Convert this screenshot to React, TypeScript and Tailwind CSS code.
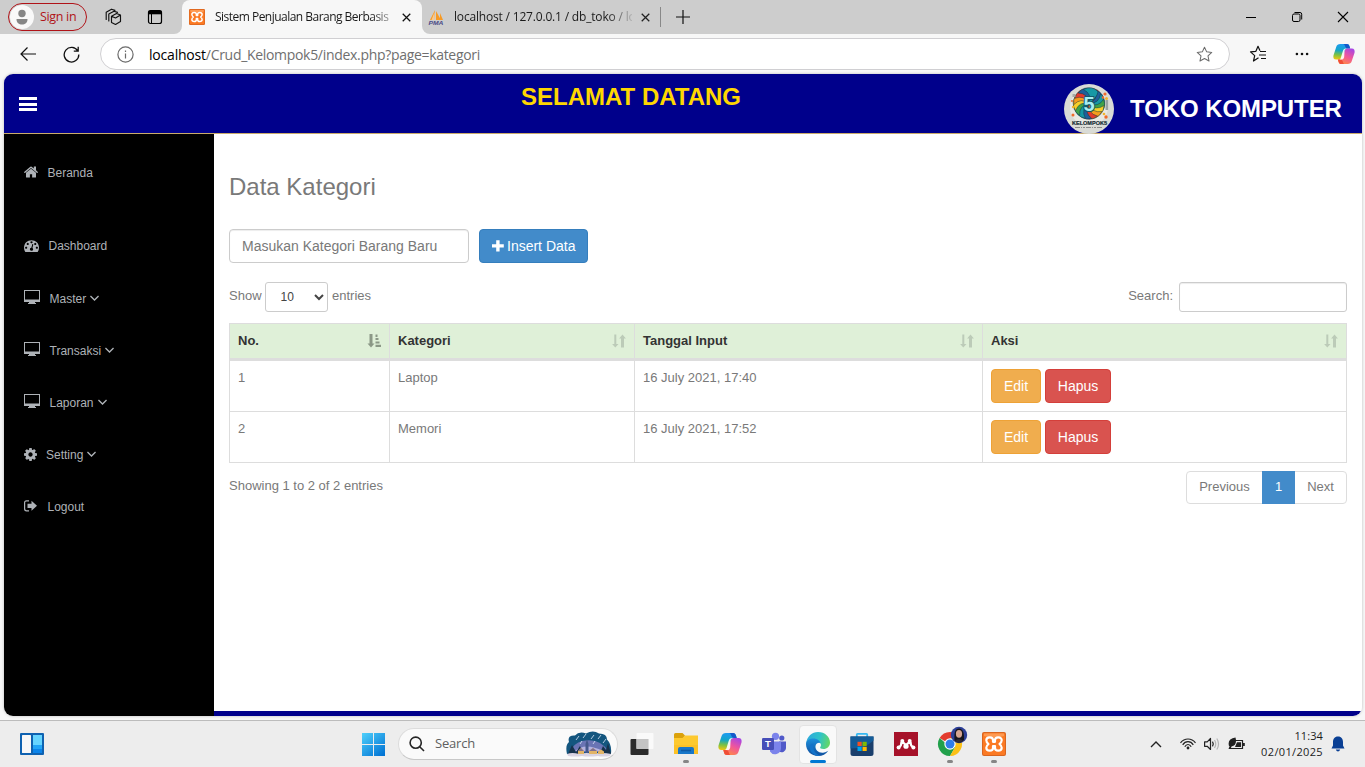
import React from 'react';

const segoe = "font-['Open_Sans','Noto_Sans',sans-serif]";

function Copilot({ id, className }: { id: string; className: string }) {
  return (
    <svg viewBox="0 0 24 24" className={className}>
      <defs>
        <linearGradient id={id + 'a'} x1="0.3" y1="0" x2="0.2" y2="1">
          <stop offset="0" stopColor="#1e9bf0" />
          <stop offset="0.4" stopColor="#12a6c8" />
          <stop offset="0.7" stopColor="#7cc142" />
          <stop offset="1" stopColor="#f3c70f" />
        </linearGradient>
        <linearGradient id={id + 'b'} x1="0.8" y1="0" x2="0.3" y2="1">
          <stop offset="0" stopColor="#a545e6" />
          <stop offset="0.5" stopColor="#f0569b" />
          <stop offset="1" stopColor="#ff8a45" />
        </linearGradient>
      </defs>
      <path d="M8 1h7.2c1.500 0 2.300 1 2.700 2.300l.8 2.700h-2c-1.800 0-2.700 1-3.200 2.600l-2.200 7.200C10.800 17.500 9.500 18 8 18H3.500C.8 18 0 16 .5 13.500L3.600 4C4.300 2 5.500 1 8 1z" fill={`url(#${id}a)`} />
      <path d="M11 1h4.200c1.500 0 2.300 1 2.700 2.300l.8 2.700h-2.200c-1.700 0-2.800-.7-3.300-2.400C12.800 2.200 12.300 1 11 1z" fill="#1458c9" />
      <path d="M16 23H8.800c-1.500 0-2.300-1-2.700-2.300L5.300 18h2c1.800 0 2.700-1 3.200-2.600l2.200-7.200C13.200 6.500 14.500 6 16 6h4.500c2.700 0 3.500 2 3 4.500L20.400 20c-.7 2-1.900 3-4.400 3z" fill={`url(#${id}b)`} />
      <path d="M13 23H8.800c-1.500 0-2.300-1-2.700-2.300L5.300 18h2.200c1.700 0 2.800.7 3.300 2.400.4 1.400.9 2.600 2.200 2.600z" fill="#f04e37" />
      <path d="M12.600 8.500C13.100 7 13.700 6 15.500 6H14c-1.900 0-2.700 1-3.200 2.600L8.700 15.500C8.300 17 7.700 18 6.500 18H10c1 0 1.800-1 2.200-2.600z" fill="#fff" opacity=".9" />
    </svg>
  );
}

function Xampp({ className }: { className: string }) {
  return (
    <svg viewBox="0 0 24 24" className={className}>
      <rect width="24" height="24" rx="2" fill="#d9651f" />
      <rect x="1" y="1" width="22" height="22" rx="1.500" fill="#fb7a24" />
      <path d="M2 1.500h20v2.500q-10 3-20 0z" fill="#ffa866" opacity=".7" />
      <path
        d="M7.800 5.300C5.400 5.300 4.300 6.700 4.300 8.300c0 1.600.9 2.700 2.200 3.700C5.200 13 4.300 14.100 4.300 15.700c0 1.600 1.100 3 3.500 3 2.300 0 3.200-1.200 3.200-2.700V14.200h2V16c0 1.500.9 2.700 3.200 2.700 2.400 0 3.500-1.400 3.500-3 0-1.600-.9-2.700-2.200-3.700 1.300-1 2.200-2.100 2.200-3.700 0-1.600-1.100-3-3.500-3-2.300 0-3.200 1.200-3.200 2.700v1.800h-2V8c0-1.500-.9-2.700-3.200-2.700z"
        fill="none" stroke="#fff" strokeWidth="2.200" strokeLinejoin="round"
      />
    </svg>
  );
}

function TabStrip() {
  return (
    <div className="flex h-[34px] w-full bg-[#f7f7f7]">
      <div className="flex w-[182px] items-center rounded-br-[8px] bg-[#cdcdcd]">
        <div className="ml-2 flex h-[28px] w-[79px] items-center rounded-full border border-[#b01318]">
          <svg viewBox="0 0 24 24" className="ml-px h-6 w-6 shrink-0">
            <circle cx="12" cy="12" r="12" fill="#f9f9f9" />
            <circle cx="12" cy="8.500" r="3.700" fill="#868686" />
            <path d="M6.500 14h11c0 4-2.500 5.500-5.500 5.500S6.500 18 6.500 14z" fill="#868686" />
          </svg>
          <span className="ml-[6px] text-[12.500px] tracking-[-0.32px] whitespace-nowrap text-[#b01318]">Sign in</span>
        </div>
        <svg viewBox="0 0 18 18" className="ml-[17px] h-[18px] w-[18px]" fill="none" stroke="#111" strokeWidth="1.150" strokeLinejoin="round" strokeLinecap="round">
          <path d="M7.500 8.300L12.500 5.500l4 1.500v6.500l-5 3-4-2zM7.500 8.300l4 1.700 5-3" />
          <path d="M4.800 13V6L10 3.200l3.500 1.200M2.200 11.500V4.200L7.500 1.200l3.500 1.200" />
        </svg>
        <svg viewBox="0 0 16 16" className="ml-[25px] h-4 w-4" fill="none" stroke="#000">
          <rect x="1.500" y="1.500" width="13" height="13" rx="2" strokeWidth="1.200" />
          <path d="M1.500 3.500h13" strokeWidth="3.600" />
          <path d="M4.500 5v9.500" strokeWidth="1" />
        </svg>
      </div>
      <div className="w-[240px] bg-[#cdcdcd]">
        <div className="flex h-full items-center rounded-t-[8px] bg-[#f7f7f7]">
          <Xampp className="ml-[7px] h-4 w-4 shrink-0" />
          <div className="ml-[10px] w-[177px] overflow-hidden text-[12px] tracking-[-0.52px] whitespace-nowrap text-[#1a1a1a] [mask-image:linear-gradient(to_right,#000_88%,rgba(0,0,0,0.3))]">
            Sistem Penjualan Barang Berbasis
          </div>
          <svg viewBox="0 0 10 10" className="ml-[10px] h-[9px] w-[9px]" stroke="#111" strokeWidth="1.400"><path d="M.8.800l8.400 8.400M9.200.800L.8 9.200" /></svg>
        </div>
      </div>
      <div className="flex flex-1 items-center rounded-bl-[8px] bg-[#cdcdcd]">
        <svg viewBox="0 0 18 16" className="ml-[5px] h-4 w-[18px] shrink-0">
          <path d="M8 1L3 11h4zM9 2v9h5zM13 4v7h3z" fill="#f79a25" />
          <path d="M7.500 3l-3 8h3z" fill="#fbc98c" />
          <text x="1.500" y="15.500" fontSize="6" fontWeight="bold" fontStyle="italic" fill="#4b4b87" fontFamily="Liberation Sans" textLength="15" lengthAdjust="spacingAndGlyphs">PMA</text>
        </svg>
        <div className="ml-[9px] w-[178px] overflow-hidden text-[12px] tracking-[-0.18px] whitespace-nowrap text-[#1a1a1a] [mask-image:linear-gradient(to_right,#000_86%,rgba(0,0,0,0.15)_100%)]">
          localhost / 127.0.0.1 / db_toko / lo
        </div>
        <svg viewBox="0 0 10 10" className="ml-[9px] h-[9px] w-[9px]" stroke="#222" strokeWidth="1.400"><path d="M.8.800l8.400 8.400M9.200.800L.8 9.200" /></svg>
        <div className="ml-[10px] h-5 w-px bg-[#888]" />
        <svg viewBox="0 0 14 14" className="ml-[15px] h-[14px] w-[14px]" stroke="#111" strokeWidth="1.200"><path d="M7 0v14M0 7h14" /></svg>
        <div className="ml-auto flex items-center pr-[17px]">
          <svg viewBox="0 0 10 10" className="h-[10px] w-[10px]" stroke="#000"><path d="M0 5.500h10" /></svg>
          <svg viewBox="0 0 10 10" className="ml-[36px] h-[10px] w-[10px] overflow-visible" stroke="#000" fill="none">
            <rect x=".5" y="2" width="7.500" height="7.500" rx="1.500" />
            <path d="M2.500.500H8Q9.700.500 9.700 2.200V7.500" />
          </svg>
          <svg viewBox="0 0 10 10" className="ml-[36px] h-[10px] w-[10px] overflow-visible" stroke="#000" strokeWidth="1.100"><path d="M0 0l10 10M10 0L0 10" /></svg>
        </div>
      </div>
    </div>
  );
}

function Toolbar() {
  return (
    <div className="flex h-10 w-full items-center bg-[#f7f7f7]">
      <svg viewBox="0 0 16 14" className="ml-5 h-[14px] w-4" fill="none" stroke="#111" strokeWidth="1.200"><path d="M16 7H1M7.500.500L1 7l6.500 6.500" /></svg>
      <svg viewBox="0 0 17 17" className="ml-[27px] h-[17px] w-[17px]" fill="none" stroke="#111" strokeWidth="1.300"><path d="M14.800 5A7.300 7.300 0 1 0 15.800 8.500M15.200.800V5.200H10.800" /></svg>
      <div className="ml-5 flex h-8 w-[1130px] items-center rounded-full border border-[#d0cfd2] bg-white">
        <svg viewBox="0 0 17 17" className="ml-[16px] h-[17px] w-[17px]" fill="none" stroke="#6b6b6b" strokeWidth="1.200">
          <circle cx="8.500" cy="8.500" r="7.600" /><path d="M8.500 7.500v5M8.500 4.600v1.400" />
        </svg>
        <div className="ml-[15px] text-[14px] tracking-[-0.31px] whitespace-nowrap text-[#6f6f6f]"><span className="tracking-[-0.2px] text-black">localhost</span>/Crud_Kelompok5/index.php?page=kategori</div>
        <svg viewBox="0 0 18 18" className="mr-[16px] ml-auto h-[17px] w-[17px]" fill="none" stroke="#6b6b6b" strokeWidth="1.100" strokeLinejoin="round"><path d="M9 1.300l2.300 4.900 5.400.6-4 3.700 1.100 5.400L9 13.200l-4.800 2.700 1.100-5.400-4-3.700 5.400-.6z" /></svg>
      </div>
      <svg viewBox="0 0 18 18" className="ml-[19px] h-[18px] w-[18px]" fill="none" stroke="#111" strokeWidth="1.200" strokeLinejoin="round">
        <path d="M9.500 12.700L4.500 16l1.200-5.400-4.200-3.700 5.400-.6L9 1.300l2 4.500M11 6.500h6M10 10h7M12 13.500h5" />
      </svg>
      <svg viewBox="0 0 14 4" className="ml-[28px] h-[4px] w-[14px]" fill="#111"><circle cx="1.900" cy="2" r="1.300" /><circle cx="7" cy="2" r="1.300" /><circle cx="12.100" cy="2" r="1.300" /></svg>
      <Copilot id="tb" className="ml-6 h-[22px] w-[22px]" />
    </div>
  );
}

const swirlColors = ['#e23b2e', '#f59d1d', '#f7cf2a', '#3fa34a', '#1798a5', '#1f5f9b'];

function ShopLogo() {
  return (
    <svg viewBox="0 0 50 50" className="h-[50px] w-[50px] shrink-0">
      <circle cx="25" cy="25" r="25" fill="#d9dbd6" />
      <circle cx="25" cy="23" r="19" fill="#e9e9e3" />
      {Array.from({ length: 15 }, (_, i) => (
        <path key={i} d="M25 19.500Q32 12 25.500 4.300Q35.500 4 38 12.500Q34 18 25 19.500z" fill={swirlColors[(i * 5) % 6]} stroke="#14323d" strokeWidth=".45" transform={`rotate(${i * 24} 25 19.500)`} />
      ))}
      <g fill="#ef6b2b">
        <circle cx="41" cy="10" r="1.600" /><circle cx="39" cy="13.500" r="1.200" /><circle cx="42" cy="33" r="1.700" /><circle cx="9" cy="31" r="1.500" /><circle cx="8" cy="17" r="1" />
      </g>
      <g fill="#f2b52a"><circle cx="42.500" cy="14.500" r="1.500" /><circle cx="9" cy="23" r="1.200" /><circle cx="40" cy="30" r="1.300" /></g>
      <rect x="41.500" y="16" width="2.600" height="10" fill="#9aa3a3" />
      <rect x="8.500" y="10" width="3" height="3" fill="#a7aaa6" />
      <text x="25" y="27" fontSize="20" fontWeight="bold" textAnchor="middle" fill="#a9eef2" stroke="#12596b" strokeWidth="2" paintOrder="stroke" fontFamily="Liberation Sans">5</text>
      <text x="8" y="41.300" fontSize="5.500" fontWeight="bold" fill="#152b33" stroke="#152b33" strokeWidth=".2" fontFamily="Liberation Sans" textLength="35" lengthAdjust="spacingAndGlyphs">KELOMPOK5</text>
      <path d="M11 43.500h28" stroke="#777" strokeWidth=".8" strokeDasharray="5 1 1 1 2 1" />
    </svg>
  );
}

const icons: Record<string, string> = {
  home: 'M1472 992v480q0 26-19 45t-45 19h-384v-384h-256v384h-384q-26 0-45-19t-19-45v-480q0-1 .5-3t.5-3l575-474 575 474q1 2 1 6zm223-69l-62 74q-8 9-21 11h-3q-13 0-21-7l-692-577-692 577q-12 8-24 7-13-2-21-11l-62-74q-8-10-7-23.500t11-21.500l719-599q32-26 76-26t76 26l244 204v-195q0-14 9-23t23-9h192q14 0 23 9t9 23v408l219 182q10 8 11 21.500t-7 23.500z',
  dash: 'M384 1152q0-53-37.500-90.500t-90.500-37.500-90.500 37.500-37.500 90.500 37.500 90.500 90.500 37.500 90.500-37.500 37.500-90.500zm192-448q0-53-37.500-90.500t-90.500-37.500-90.500 37.500-37.500 90.500 37.500 90.500 90.500 37.500 90.500-37.500 37.500-90.500zm428 481l101-382q6-26-7.500-48.500t-38.500-29.500-48 6.500-30 39.500l-101 382q-60 5-107 43.500t-63 98.500q-20 77 20 146t117 89 146-20 89-117q16-60-6-117t-72-91zm660-33q0-53-37.500-90.500t-90.500-37.500-90.500 37.500-37.500 90.500 37.500 90.500 90.500 37.500 90.500-37.500 37.500-90.500zm-640-640q0-53-37.500-90.500t-90.500-37.500-90.500 37.500-37.500 90.500 37.500 90.500 90.500 37.500 90.500-37.500 37.500-90.500zm448 192q0-53-37.500-90.500t-90.500-37.500-90.500 37.500-37.500 90.500 37.500 90.500 90.500 37.500 90.500-37.500 37.500-90.500zm320 448q0 261-141 483-19 29-54 29h-1402q-35 0-54-29-141-221-141-483 0-182 71-348t191-286 286-191 348-71 348 71 286 191 191 286 71 348z',
  cog: 'M1152 896q0-106-75-181t-181-75-181 75-75 181 75 181 181 75 181-75 75-181zm512-109v222q0 12-8 23t-20 13l-185 28q-19 54-39 91 35 50 107 138 10 12 10 25t-9 23q-27 37-99 108t-94 71q-12 0-26-9l-138-108q-44 23-91 38-16 136-29 186-7 28-36 28h-222q-14 0-24.500-8.500t-11.500-21.500l-28-184q-49-16-90-37l-141 107q-10 9-25 9-14 0-25-11-126-114-165-168-7-10-7-23 0-12 8-23 15-21 51-66.500t54-70.500q-27-50-41-99l-183-27q-13-2-21-12.500t-8-23.500v-222q0-12 8-23t19-13l186-28q14-46 39-92-40-57-107-138-10-12-10-24 0-10 9-23 26-36 98.500-107.500t94.500-71.500q13 0 26 10l138 107q44-23 91-38 16-136 29-186 7-28 36-28h222q14 0 24.500 8.500t11.500 21.500l28 184q49 16 90 37l142-107q9-9 24-9 13 0 25 10 129 119 165 170 7 8 7 22 0 12-8 23-15 21-51 66.500t-54 70.500q26 50 41 98l183 28q13 2 21 12.500t8 23.500z',
};

function SideIcon({ name }: { name: string }) {
  if (name === 'desktop')
    return (
      <svg viewBox="0 0 16 14" className="h-[14px] w-4" fill="#aeb2b7"><path fillRule="evenodd" d="M0 0h16v12h-5v1h1v1H4v-1h1v-1H0zM1 1v8.500h14V1z" /></svg>
    );
  if (name === 'logout')
    return (
      <svg viewBox="0 0 13 12" className="h-3 w-[13px]" fill="#aeb2b7">
        <path d="M5 .8H2.500Q.6.800.6 2.800v6Q.6 10.800 2.500 10.800H5" fill="none" stroke="#aeb2b7" strokeWidth="1.200" />
        <path d="M3.500 3.700h4V.800L13 5.800 7.500 10.800V7.900h-4z" />
      </svg>
    );
  if (name === 'home')
    return <svg viewBox="90 240 1610 1300" className="h-[12px] w-[14px]" fill="#aeb2b7"><path d={icons.home} /></svg>;
  if (name === 'dash')
    return <svg viewBox="0 128 1792 1536" className="h-[13px] w-[15px]" fill="#aeb2b7"><path d={icons.dash} /></svg>;
  return <svg viewBox="128 128 1536 1536" className="h-[13px] w-[13px]" fill="#aeb2b7"><path d={icons.cog} /></svg>;
}

const menu = [
  { icon: 'home', label: 'Beranda', gap: 'ml-[9.500px]', arrow: false, h: 'h-[73px]' },
  { icon: 'dash', label: 'Dashboard', gap: 'ml-[9.500px]', arrow: false, h: 'h-[53px]' },
  { icon: 'desktop', label: 'Master', gap: 'ml-[9.500px]', arrow: true, h: 'h-[52px]' },
  { icon: 'desktop', label: 'Transaksi', gap: 'ml-[9.500px]', arrow: true, h: 'h-[52px]' },
  { icon: 'desktop', label: 'Laporan', gap: 'ml-[9.500px]', arrow: true, h: 'h-[52px]' },
  { icon: 'cog', label: 'Setting', gap: 'ml-[9px]', arrow: true, h: 'h-[52px]' },
  { icon: 'logout', label: 'Logout', gap: 'ml-[10.500px]', arrow: false, h: 'h-[52px]' },
];

function Sidebar() {
  return (
    <nav className="w-[210px] bg-black pt-[30px] text-[12px] text-[#aeb2b7]">
      {menu.map((m) => (
        <div key={m.label} className={m.h}>
          <div className="flex h-[18px] items-center pl-5">
            <div className={m.icon === 'desktop' ? 'pb-[4px]' : 'pb-[2px]'}><SideIcon name={m.icon} /></div>
            <span className={m.gap}>{m.label}</span>
            {m.arrow && (
              <svg viewBox="0 0 10 6" className="mb-[3px] ml-[4px] h-[6px] w-[9px]" fill="none" stroke="#aeb2b7" strokeWidth="1.500"><path d="M.5.700L5 5.200 9.500.700" /></svg>
            )}
          </div>
        </div>
      ))}
    </nav>
  );
}

function SortIcon({ active }: { active?: boolean }) {
  return active ? (
    <svg viewBox="0 0 14 14" className="h-[14px] w-[14px]" fill="#8b9886">
      <path d="M2.500 0h3v9.500H7.500L4 13.500.5 9.500h2zM8.500 .5h2v2.500h-2zM8.500 4h3v2h-3zM8.500 7.500h4v2h-4zM8.500 10.700h5.500v2.300h-5.500z" />
    </svg>
  ) : (
    <svg viewBox="0 0 14 14" className="h-[14px] w-[14px]" fill="#bccbb8">
      <path d="M2.300.500h2v9.500h2.200L3.300 13.500.1 10h2.200zM9 13.500h3V4.500h1.900L10.500.500 7.100 4.500H9z" />
    </svg>
  );
}

const cols = 'grid grid-cols-[161px_245px_348px_364px]';

function Main() {
  const rows = [
    ['1', 'Laptop', '16 July 2021, 17:40'],
    ['2', 'Memori', '16 July 2021, 17:52'],
  ];
  return (
    <main className="flex flex-1 flex-col border-b-[5px] border-[#00008b] bg-white px-[15px] pt-[38px] text-[13px] text-[#797979]">
      <h3 className="h-[57px] text-[24px] leading-[30px]">Data Kategori</h3>
      <div className="flex h-[34px] text-[14px]">
        <div className="flex w-[240px] items-center rounded-[4px] border border-[#ccc] pl-3 shadow-[inset_0_1px_1px_rgba(0,0,0,0.075)]">Masukan Kategori Barang Baru</div>
        <button className="ml-[10px] flex w-[109px] items-center rounded-[4px] border border-[#357ebd] bg-[#428bca] pl-[12px] text-white">
          <svg viewBox="0 0 12 12" className="mr-[3px] h-[12px] w-[12px]" fill="#fff"><path d="M4.200.300h3.400v3.900h4.200v3.400H7.600v3.900H4.200V7.600H0V4.200h4.200z" /></svg>
          <span className="whitespace-nowrap">Insert Data</span>
        </button>
      </div>
      <div className="mt-[19px] flex h-[41px] justify-between">
        <div className="flex h-[30px]">
          <span className="pt-[4px] leading-[20px]">Show</span>
          <div className="ml-[3px] flex w-[63px] items-center rounded-[3px] border border-[#ccc] pl-[15px] text-[12px] text-[#444]">
            10
            <svg viewBox="0 0 10 7" className="ml-[20px] h-[7px] w-[10px]" fill="none" stroke="#444" strokeWidth="2"><path d="M1 1l4 4 4-4" /></svg>
          </div>
          <span className="ml-[4.500px] pt-[4px] leading-[20px]">entries</span>
        </div>
        <div className="flex h-[30px]">
          <span className="pt-[4px] leading-[20px]">Search:</span>
          <div className="ml-[6px] w-[168px] rounded-[3px] border border-[#ccc] shadow-[inset_0_1px_1px_rgba(0,0,0,0.075)]" />
        </div>
      </div>
      <div className={`${cols} h-[38px] border-t border-b-[3px] border-[#ddd] bg-[#dff0d8] font-bold text-[#333]`}>
        {['No.', 'Kategori', 'Tanggal Input', 'Aksi'].map((h, i) => (
          <div key={h} className="flex items-center justify-between border-r border-[#ddd] pr-[8px] pl-2 first:border-l">
            {h}
            <SortIcon active={i === 0} />
          </div>
        ))}
      </div>
      {rows.map((r) => (
        <div key={r[0]} className={`${cols} h-[51px] border-b border-[#ddd]`}>
          {r.map((c) => (
            <div key={c} className="border-r border-[#ddd] pt-[7px] pl-2 leading-[20px] first:border-l">{c}</div>
          ))}
          <div className="flex gap-[4px] border-r border-[#ddd] pt-2 pl-2 text-[14px] text-white">
            <button className="h-[34px] w-[50px] rounded-[4px] border border-[#eea236] bg-[#f0ad4e]">Edit</button>
            <button className="h-[34px] w-[66px] rounded-[4px] border border-[#d43f3a] bg-[#d9534f]">Hapus</button>
          </div>
        </div>
      ))}
      <div className="flex justify-between pt-[8px]">
        <span className="pt-[5px] leading-[20px]">Showing 1 to 2 of 2 entries</span>
        <div className="flex h-[33px] w-[161px] rounded-[4px] border border-[#ddd] leading-[30px]">
          <span className="w-[75px] text-center">Previous</span>
          <span className="-my-px w-[33px] bg-[#428bca] pt-px text-center text-white">1</span>
          <span className="flex-1 text-center">Next</span>
        </div>
      </div>
    </main>
  );
}

function Teams() {
  return (
    <svg viewBox="0 0 24 24" className="h-6 w-6">
      <circle cx="19.800" cy="6" r="2.600" fill="#5059c9" /><circle cx="13.500" cy="4.300" r="3.600" fill="#7b83eb" />
      <path d="M17 9.500h7v6a4.500 4.500 0 0 1-7 4z" fill="#5059c9" />
      <path d="M8 9.500h11v7a6 6 0 0 1-11 3z" fill="#7b83eb" />
      <rect y="6" width="12" height="12" rx="1.200" fill="#464eb8" />
      <text x="6" y="15.300" fontSize="9.500" fontWeight="bold" fill="#fff" textAnchor="middle" fontFamily="Liberation Sans">T</text>
    </svg>
  );
}

function Edge() {
  return (
    <svg viewBox="0 0 24 24" className="h-6 w-6">
      <defs>
        <linearGradient id="eg" x1="0" y1=".3" x2="1" y2=".5"><stop offset="0" stopColor="#2fa9dd" /><stop offset=".55" stopColor="#2fc3c8" /><stop offset="1" stopColor="#64d765" /></linearGradient>
        <linearGradient id="eb" x1="0" y1="0" x2="0" y2="1"><stop offset="0" stopColor="#1e8fdc" /><stop offset="1" stopColor="#0f4f9e" /></linearGradient>
      </defs>
      <path d="M.2 11C1 4.500 6 0 12 0c7 0 12 5 12 10.500 0 4-3 6.500-6.500 6.500-2.500 0-4-1-3.200-2 1.200-1.500.7-3-.3-4C11 8 4 6.500.2 11z" fill="url(#eg)" />
      <path d="M0 12c0-3.500 3.500-5.500 7.500-5.500 3.500 0 6.500 2.200 7 4.500-2-.5-4.500 0-5 3-.5 4 3.500 7.500 8.500 6.500 1.800-.3 3-1 4.300-1.800C20 22 16.500 24 12 24 5.500 24 0 19 0 12z" fill="url(#eb)" />
      <path d="M7.500 11.500C6 15 8 22 14.500 23.700 9 25 3.500 20 3.700 15c.1-2 1.600-3.500 3.800-3.500z" fill="#1473c9" />
    </svg>
  );
}

function Store() {
  return (
    <svg viewBox="0 0 24 24" className="h-6 w-6">
      <path d="M6.800 5V2.500Q6.800 1.800 7.500 1.800h9q.7 0 .7.700V5" fill="none" stroke="#35b8f1" strokeWidth="1.800" />
      <path d="M.5 4.500h23v17q0 2.500-2.500 2.500H3Q.5 24 .5 21.500z" fill="#1a3f6c" /><path d="M.5 4.500h23v4q-8 8-23 8z" fill="#135c98" />
      <path d="M7.500 9.800h4.200V14H7.500z" fill="#f25022" /><path d="M12.500 9.800h4.200V14h-4.200z" fill="#7fba00" /><path d="M7.500 14.800h4.200V19H7.500z" fill="#00a4ef" /><path d="M12.500 14.800h4.200V19h-4.200z" fill="#ffb900" />
    </svg>
  );
}

function Mendeley() {
  return (
    <svg viewBox="0 0 24 24" className="h-6 w-6">
      <rect width="24" height="24" fill="#a61229" />
      <path d="M4.800 15.300Q7.500 14 7.500 10M8.200 9.500L12 13.200 15.800 9.500M19.200 15.300Q16.500 14 16.500 10" fill="none" stroke="#fff" strokeWidth="2.200" />
      <g fill="#fff"><circle cx="4.600" cy="15.500" r="2" /><circle cx="19.400" cy="15.500" r="2" /><circle cx="8.300" cy="9" r="2" /><circle cx="15.700" cy="9" r="2" /><circle cx="12" cy="14.200" r="2.600" /></g>
    </svg>
  );
}

function Chrome() {
  return (
    <svg viewBox="0 0 24 24" className="h-6 w-6 overflow-visible">
      <path d="M12 12L1.600 6A12 12 0 0 1 22.400 6z" fill="#e33b2e" />
      <path d="M1.600 6A12 12 0 0 0 12 24l5.200-9H12z" fill="#21a04b" />
      <path d="M22.400 6A12 12 0 0 1 12 24l5.200-9L12 6z" fill="#fbc116" />
      <circle cx="12" cy="12" r="5.700" fill="#fff" /><circle cx="12" cy="12" r="4.500" fill="#2f7de9" />
      <circle cx="21" cy="3" r="8.200" fill="#2d3f97" />
      <path d="M16.500 8.500c-.5-8 .5-12 4.500-12s5.500 5 5 11.500q-5 5-9.500.5z" fill="#17151d" />
      <ellipse cx="21" cy="1.800" rx="3.100" ry="3.900" fill="#d6a590" />
      <path d="M17 9q4-4 8 0-4 3.300-8 0z" fill="#2e2a35" />
    </svg>
  );
}

function Explorer() {
  return (
    <svg viewBox="0 0 24 24" className="h-6 w-6">
      <path d="M0 2.500Q0 1 1.500 1h7l2.500 2.500L9 7H0z" fill="#dba10b" />
      <path d="M0 6h8.500l2.500-2.500H24V22H0z" fill="#fdc92f" /><path d="M0 13h24v9H0z" fill="#fbbd22" opacity=".6" />
      <path d="M4 22v-5q0-2 2-2h12q2 0 2 2v5z" fill="#1877c9" /><path d="M7 18.500h10" stroke="#0f5aa4" strokeWidth="1.600" />
    </svg>
  );
}

function TaskView() {
  return (
    <svg viewBox="0 0 24 24" className="h-6 w-6">
      <rect x=".5" y="7" width="18" height="16" rx="1" fill="#2b2b2b" /><rect x="6.500" y="1" width="17" height="16" rx="1" fill="#fbfbfb" opacity=".95" /><rect x="6.500" y="7" width="12" height="10" fill="#c3c3c3" />
    </svg>
  );
}

const apps = [
  { node: <TaskView />, mark: '' },
  { node: <Explorer />, mark: 'dot' },
  { node: <Copilot id="tk" className="h-6 w-6" />, mark: '' },
  { node: <Teams />, mark: '' },
  { node: <Edge />, mark: 'active' },
  { node: <Store />, mark: '' },
  { node: <Mendeley />, mark: '' },
  { node: <Chrome />, mark: 'dot' },
  { node: <Xampp className="h-6 w-6" />, mark: 'dot' },
];

function Village() {
  return (
    <svg viewBox="0 0 46 26" className="ml-auto h-[26px] w-[46px]">
      <path d="M1 23Q-1 14 3 11 1 4 9 4.500 13 0 20 2.500q7-4 13 0 8 0 8 6 5 5 4 14z" fill="#14567f" />
      <path d="M4 21q4-9 12-11Q34 6 43 21z" fill="#6a74b4" /><path d="M9 20q10-9 28 0z" fill="#b4b2e0" />
      <g stroke="#dbe8fa" strokeWidth=".8"><path d="M10 9l3-4M17 7l3-4M25 8l3-4M32 8l3-4M37 12l3-4M27 13l2-3M14 13l2-3" /></g>
      <path d="M2 23l4-9 4 7 4-6 3 8zM34 22l3-7 3 4 2-7 3 11z" fill="#17324c" />
      <path d="M1 23q5-2 12 0 8-2 14 0 8-2 18 0l-1 2q-7 1-12 0-10 1-16 0-7 1-14 0z" fill="#d9d3e2" />
      <path d="M19.500 22V13l1.500-5 1.500 5v9z" fill="#45588c" />
      <path d="M12 20l3-3 3 3v3h-6zM23 20l4-3 4 3v3h-8zM32 20.500l3-2 3 2v2.500h-6z" fill="#e2b467" />
      <path d="M12 20l3-3 3 3zM23 20l4-3 4 3z" fill="#7e6f92" />
    </svg>
  );
}

function Taskbar() {
  return (
    <div className="flex h-[47px] w-full items-center border-t border-[#bcbcbc] bg-[#ededed]">
      <svg viewBox="0 0 24 22" className="ml-5 h-[22px] w-6">
        <rect width="24" height="22" rx="1" fill="#0f62b1" /><rect x="2" y="2" width="9" height="18" rx=".6" fill="#f8f8f8" />
        <path d="M13 2h9v10h-9z" fill="#66d5ff" /><path d="M13 12h9v4h-9z" fill="#21a5f7" /><path d="M13 16h9v4h-9z" fill="#0b84ea" />
      </svg>
      <svg viewBox="0 0 23 23" className="ml-[318px] h-[23px] w-[23px]">
        <defs><linearGradient id="w" gradientUnits="userSpaceOnUse" x1="0" y1="0" x2="20" y2="23"><stop offset="0" stopColor="#4fd0fb" /><stop offset="1" stopColor="#0274d4" /></linearGradient></defs>
        <path d="M0 0h11v11H0zM12 0h11v11H12zM0 12h11v11H0zM12 12h11v11H12z" fill="url(#w)" />
      </svg>
      <div className="ml-[13px] flex h-8 w-[220px] items-center rounded-full border border-[#dcdcdc] border-b-[#c8c8c8] bg-[#fafafa] pr-[5px]">
        <svg viewBox="0 0 16 16" className="ml-[10px] h-4 w-4" fill="none" stroke="#262626" strokeWidth="1.600"><circle cx="6.700" cy="6.700" r="5.600" /><path d="M10.700 10.700L15 15" /></svg>
        <span className="ml-[10px] text-[13px] tracking-[-0.2px] text-[#5f5f5f]">Search</span>
        <Village />
      </div>
      <div className="ml-[2px] flex h-full">
        {apps.map((a, i) => (
          <div key={i} className="relative flex h-full w-[44px] items-center justify-center">
            <div className={a.mark === 'active' ? 'flex h-[39px] w-[38px] items-center justify-center rounded-[4px] border border-[#e3e3e3] bg-[#f9f9f9]' : 'flex'}>{a.node}</div>
            {a.mark === 'dot' && <div className="absolute bottom-[4px] h-[3px] w-[6px] rounded-full bg-[#868686]" />}
            {a.mark === 'active' && <div className="absolute bottom-[4px] h-[3px] w-4 rounded-full bg-[#0078d4]" />}
          </div>
        ))}
      </div>
      <div className="mr-[20px] ml-auto flex items-center">
        <svg viewBox="0 0 12 7" className="h-[7px] w-[12px]" fill="none" stroke="#222" strokeWidth="1.400"><path d="M1 6l5-5 5 5" /></svg>
        <svg viewBox="0 0 16 12" className="ml-[18px] h-3 w-4" fill="none" stroke="#222" strokeWidth="1.200">
          <path d="M.5 4.800Q3.500 1 8 1t7.500 3.800M2.700 6.800Q4.700 3.700 8 3.700t5.300 3.100M4.800 8.800Q6 6.500 8 6.500t3.200 2.300" /><circle cx="8" cy="10" r="1.400" fill="#222" stroke="none" />
        </svg>
        <svg viewBox="0 0 16 14" className="ml-[8px] h-[14px] w-4" fill="none" stroke="#222" strokeWidth="1.200" strokeLinejoin="round">
          <path d="M.6 4.800h2.600L6.500 1.500v11L3.200 9.300H.6zM8.500 4.700Q10 7 8.500 9.300" /><path d="M10.500 3q2.500 4 0 8M12.800 1.500q3.500 5.500 0 11" stroke="#b5b5b5" />
        </svg>
        <svg viewBox="0 0 17 14" className="ml-[8px] h-[14px] w-[17px]" fill="#222">
          <path d="M5 3.500h9.500V11.500H2.500V8" fill="none" stroke="#222" strokeWidth="1.200" /><path d="M9 5.300h4v4.700H7zM15 6h1.800v3H15z" /><path d="M1 9Q-1 2 7.500.500 9.500 8 3.500 9.500L2 12H.5l1.200-3z" />
        </svg>
        <div className="ml-[15px] w-[63px] text-right text-[11px] leading-[16px] whitespace-nowrap text-[#1c1c1c]"><div className="tracking-[0.1px]">11:34</div><div className="tracking-[0.35px]">02/01/2025</div></div>
        <svg viewBox="0 0 14 16" className="ml-[8px] h-4 w-[14px]" fill="#0a3f94"><path d="M7 .500C3.500.500 2 3 2 6v3.500L.500 12.500h13L12 9.500V6C12 3 10.500.500 7 .500zM4.800 13.500h4.400Q8.500 15.500 7 15.500T4.800 13.500z" /></svg>
      </div>
    </div>
  );
}

export default function App() {
  return (
    <div className={`flex h-[767px] w-[1365px] flex-col overflow-hidden bg-[#f7f7f7] ${segoe}`}>
      <TabStrip />
      <Toolbar />
      <div className="ml-[4px] flex h-[642px] w-[1358px] flex-col overflow-hidden rounded-[9px] font-['Liberation_Sans',Arial,sans-serif] shadow-[0_0_3px_rgba(0,0,0,0.25)]">
        <header className="flex h-[60px] shrink-0 items-start border-b border-[#c9aa6b] bg-[#00008b] font-bold">
          <div className="mt-[23px] ml-[15px] flex w-[18px] flex-col gap-[2.500px]">
            <div className="h-[3px] bg-white" /><div className="h-[3px] bg-white" /><div className="h-[3px] bg-white" />
          </div>
          <div className="mt-[9px] ml-[484px] text-[24px] leading-[28px] whitespace-nowrap text-[#ffd700]">SELAMAT DATANG</div>
          <div className="mt-[10px] mr-[19px] ml-auto flex h-[50px] items-center gap-4">
            <ShopLogo />
            <span className="w-[213px] text-[24px] tracking-[-0.08px] whitespace-nowrap text-white">TOKO KOMPUTER</span>
          </div>
        </header>
        <div className="flex flex-1">
          <Sidebar />
          <Main />
        </div>
      </div>
      <div className="h-[4px] shrink-0" />
      <Taskbar />
    </div>
  );
}
